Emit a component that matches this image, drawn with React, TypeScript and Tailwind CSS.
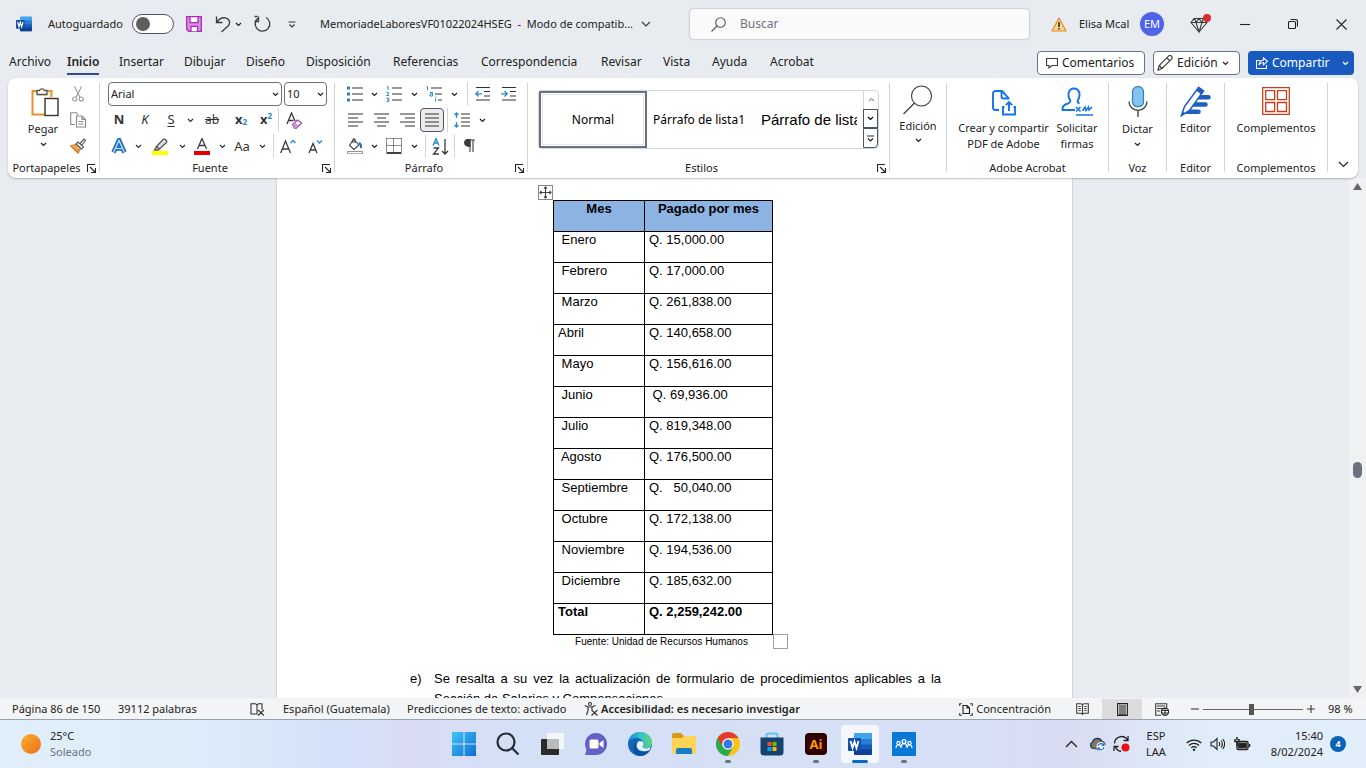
import type { ReactNode } from "react";
import clsx from "clsx";

const months = [
  ["Enero", "Q. 15,000.00"],
  ["Febrero", "Q. 17,000.00"],
  ["Marzo", "Q. 261,838.00"],
  ["Abril", "Q. 140,658.00"],
  ["Mayo", "Q. 156,616.00"],
  ["Junio", " Q. 69,936.00"],
  ["Julio", "Q. 819,348.00"],
  ["Agosto", "Q. 176,500.00"],
  ["Septiembre", "Q.   50,040.00"],
  ["Octubre", "Q. 172,138.00"],
  ["Noviembre", "Q. 194,536.00"],
  ["Diciembre", "Q. 185,632.00"],
];

const tabs = [
  { name: "Archivo", width: "w-[58px]" },
  { name: "Inicio", width: "w-[52px]" },
  { name: "Insertar", width: "w-[65px]" },
  { name: "Dibujar", width: "w-[62px]" },
  { name: "Diseño", width: "w-[60px]" },
  { name: "Disposición", width: "w-[87px]" },
  { name: "Referencias", width: "w-[88px]" },
  { name: "Correspondencia", width: "w-[120px]" },
  { name: "Revisar", width: "w-[62px]" },
  { name: "Vista", width: "w-[49px]" },
  { name: "Ayuda", width: "w-[58px]" },
  { name: "Acrobat", width: "w-[58px]" },
];

type IconProps = { w?: number; h?: number; className?: string; children: ReactNode };

const Icon = ({ w = 16, h = 16, className, children }: IconProps) => (
  <svg
    width={w}
    height={h}
    viewBox={`0 0 ${w} ${h}`}
    fill="none"
    stroke="#3b3b3b"
    strokeWidth="1.1"
    className={clsx("shrink-0", className)}
    aria-hidden="true"
  >
    {children}
  </svg>
);

const Chevron = ({ className }: { className?: string }) => (
  <Icon w={7} h={5} className={className}>
    <path d="M1 1l2.500 2.500L6 1" stroke="currentColor" strokeWidth="1.200" />
  </Icon>
);

type ToolProps = { label: string; className?: string; children: ReactNode };

const Tool = ({ label, className, children }: ToolProps) => (
  <button
    type="button"
    aria-label={label}
    className={clsx("flex h-6 shrink-0 items-center justify-center", className)}
  >
    {children}
  </button>
);

const Drop = ({ label }: { label: string }) => (
  <Tool label={label} className="w-3">
    <Chevron />
  </Tool>
);

const Rule = ({ className }: { className?: string }) => (
  <div className={clsx("h-6 w-px shrink-0 bg-gray-300", className)} />
);

const Divider = () => <div className="mt-[5px] h-[89px] w-px shrink-0 bg-gray-300" />;

const WordLogo = ({ size }: { size: number }) => (
  <svg width={size} height={size} viewBox="0 0 24 24" aria-hidden="true">
    <rect x="6" y="1" width="18" height="22" rx="1.5" fill="#185abd" />
    <path d="M7.500 1h15A1.500 1.500 0 0 1 24 2.500V7H6V2.500A1.500 1.500 0 0 1 7.500 1z" fill="#41a5ee" />
    <path d="M6 7h18v5.500H6z" fill="#2b7cd3" />
    <path d="M6 17.500h18v4a1.500 1.500 0 0 1-1.500 1.500h-15A1.500 1.500 0 0 1 6 21.500z" fill="#103f91" />
    <rect x="0" y="6" width="13" height="13" rx="1" fill="#1450a8" />
    <path d="M2.500 9l2 7 2-6.500 2 6.500 2-7" fill="none" stroke="#fff" strokeWidth="1.800" />
  </svg>
);

const Group = ({
  name,
  launcher,
  className,
  children,
}: {
  name?: string;
  launcher?: boolean;
  className?: string;
  children: ReactNode;
}) => (
  <section className={clsx("flex flex-col pt-1", className)}>
    <div className="h-[76px]">{children}</div>
    <div className="relative flex h-5 items-center justify-center text-[11px]">
      <span className={launcher ? "pr-[14px]" : undefined}>{name}</span>
      {launcher && (
        <button type="button" aria-label={`Opciones de ${name}`} className="absolute right-[3px]">
          <Icon w={9} h={9}>
            <path d="M.5 8V.5H8M3 3l5 5M8.500 4v4.500H4" stroke="#222" />
          </Icon>
        </button>
      )}
    </div>
  </section>
);

const TitleBar = () => (
  <header className="flex h-12 items-center text-[11px]">
    <div className="flex w-[690px] shrink-0 items-center pl-4">
      <WordLogo size={16} />
      <label htmlFor="autosave" className="ml-4 w-[84px] whitespace-nowrap">
        Autoguardado
      </label>
      <input
        id="autosave"
        type="checkbox"
        role="switch"
        className="h-5 w-[42px] shrink-0 appearance-none rounded-full border border-gray-600 bg-white before:mt-[2px] before:ml-[3px] before:block before:size-[14px] before:rounded-full before:bg-[#5d5d5d]"
      />
      <button type="button" aria-label="Guardar" className="ml-3">
        <Icon w={16} h={16}>
          <path d="M.7.7h14.600v14.600H2.700l-2-2z" fill="#e08be6" stroke="#a32fae" strokeWidth="1.300" />
          <path d="M4 .7h8v6H4zM5 15.300v-5h6.500v5" fill="#fff" stroke="#a32fae" strokeWidth="1.300" />
        </Icon>
      </button>
      <button type="button" aria-label="Deshacer" className="ml-3">
        <Icon w={17} h={18}>
          <path d="M2.500 1.500v6h6M2.500 7.500C5 4 8 2.500 11 2.800c4.500.5 6 5.200 3 8.200L7.500 17" strokeWidth="1.300" />
        </Icon>
      </button>
      <button type="button" aria-label="Más acciones para deshacer" className="ml-1">
        <Chevron />
      </button>
      <button type="button" aria-label="Rehacer" className="ml-3">
        <Icon w={18} h={18}>
          <path d="M3.500 1.500h-3M4.500 1.500v5H.500M12 2.500a7.300 7.300 0 1 1-7.500.3" strokeWidth="1.300" />
        </Icon>
      </button>
      <button type="button" aria-label="Personalizar barra" className="ml-4">
        <Icon w={8} h={7}>
          <path d="M.5 1h7M1.500 3.500L4 6l2.500-2.500" strokeWidth="1.200" />
        </Icon>
      </button>
      <button type="button" className="ml-6 flex items-center gap-2 whitespace-pre">
        <span>MemoriadeLaboresVF01022024HSEG  -  Modo de compatib...</span>
        <Icon w={10} h={7}>
          <path d="M1 1l4 4 4-4" strokeWidth="1.200" />
        </Icon>
      </button>
    </div>
    <div className="flex h-[30px] min-w-0 flex-1 items-center gap-[14px] rounded bg-[#fafafa] pl-[21px] shadow-[0_0_2px_rgba(0,0,0,0.4)]">
      <Icon w={15} h={15}>
        <circle cx="9.500" cy="5.500" r="4.800" stroke="#555" />
        <path d="M6 9L.5 14.500" stroke="#555" />
      </Icon>
      <input
        type="search"
        aria-label="Buscar"
        placeholder="Buscar"
        className="min-w-0 flex-1 bg-transparent text-xs outline-none placeholder:text-gray-500"
      />
    </div>
    <div className="flex w-[337px] shrink-0 items-center pl-[22px]">
      <Icon w={16} h={15}>
        <path d="M8 1L15 14H1z" fill="#ffd88c" stroke="#e0872a" strokeWidth="1.200" strokeLinejoin="round" />
        <path d="M8 5v5M8 11v1.500" stroke="#222" strokeWidth="1.500" />
      </Icon>
      <span className="ml-3 w-[61px] whitespace-nowrap">Elisa Mcal</span>
      <span className="flex size-6 items-center justify-center rounded-full bg-[#4f63e8] text-[11px] text-white">
        EM
      </span>
      <button type="button" aria-label="Novedades" className="ml-[26px]">
        <Icon w={22} h={20}>
          <path d="M4 4.500h10l3 4L9 18 1 8.500zM1 8.500h16M6 8.500L9 18l3-9.500M4.500 4.500l1.500 4 3-4 3 4 1.500-4" />
          <circle cx="17" cy="4" r="4" fill="#d92c2c" stroke="none" />
        </Icon>
      </button>
      <button type="button" aria-label="Minimizar" className="ml-7">
        <Icon w={10} h={10}>
          <path d="M0 5.500h10" stroke="#222" />
        </Icon>
      </button>
      <button type="button" aria-label="Restaurar" className="ml-[38px]">
        <Icon w={10} h={10}>
          <rect x=".5" y="2.500" width="7" height="7" rx="1" stroke="#222" />
          <path d="M2.500.5h5a2 2 0 0 1 2 2v5" stroke="#222" />
        </Icon>
      </button>
      <button type="button" aria-label="Cerrar" className="ml-[38px]">
        <Icon w={11} h={11}>
          <path d="M.5.5l10 10M10.500.5l-10 10" stroke="#222" />
        </Icon>
      </button>
    </div>
  </header>
);

const TabBar = () => (
  <div className="flex h-[30px] items-start justify-between pr-[12px] pl-[9px] text-xs">
    <nav className="flex pt-[5px]">
      {tabs.map(({ name, width }) => (
        <button key={name} type="button" className={clsx("text-left leading-[18px] whitespace-nowrap", width)}>
          <span
            className={clsx(
              "block h-[22px] w-fit",
              name === "Inicio" && "border-b-2 border-[#2b4f97] font-semibold",
            )}
          >
            {name}
          </span>
        </button>
      ))}
    </nav>
    <div className="flex gap-2 pt-[3px]">
      <button type="button" className="flex h-6 w-[108px] items-center gap-1 rounded border border-gray-500 bg-white pl-2">
        <Icon w={12} h={12}>
          <path d="M.5 1.500h11v7H6l-3 2.500V8.500H.5z" />
        </Icon>
        Comentarios
      </button>
      <button type="button" className="flex h-6 w-[87px] items-center gap-1 rounded border border-gray-500 bg-white pl-[3px]">
        <Icon w={16} h={16}>
          <path d="M1 15l1.200-4.500L11.500 1.200a1.800 1.800 0 0 1 3 3L5 13.500zM10 3l3 3M2.200 10.500L5 13.500" />
        </Icon>
        Edición
        <Chevron />
      </button>
      <button type="button" className="flex h-6 w-[106px] items-center gap-1 rounded bg-[#185abd] pl-2 text-white">
        <Icon w={12} h={12}>
          <path d="M4 3.500H.5v8h10V8M7.500.8l4 3.500-4 3.500V5.500C5.500 5.500 4 6.500 3 8c.3-3 2-4.800 4.500-5z" stroke="#fff" />
        </Icon>
        Compartir
        <Chevron className="ml-2" />
      </button>
    </div>
  </div>
);

const lines = (d: string) => <path d={d} stroke="#333" strokeWidth="1.200" />;

const FontGroup = () => (
  <Group name="Fuente" launcher className="w-[234px]">
    <div className="flex h-6 gap-[2px] pl-2">
      <div className="relative w-[174px]">
        <select aria-label="Fuente" className="block h-6 w-full appearance-none rounded border border-gray-500 bg-white pl-[2px] text-[11px]">
          <option>Arial</option>
        </select>
        <Chevron className="pointer-events-none absolute top-[10px] right-[3px]" />
      </div>
      <div className="relative w-[43px]">
        <select aria-label="Tamaño" className="block h-6 w-full appearance-none rounded border border-gray-500 bg-white pl-[2px] text-[11px]">
          <option>10</option>
        </select>
        <Chevron className="pointer-events-none absolute top-[10px] right-[3px]" />
      </div>
    </div>
    <div className="flex h-7 items-center pl-[6px] text-[13px] text-[#333]">
      <Tool label="Negrita" className="w-[26px] font-bold">N</Tool>
      <Tool label="Cursiva" className="w-[26px] italic">K</Tool>
      <Tool label="Subrayado" className="w-[26px] underline underline-offset-2">S</Tool>
      <Drop label="Tipos de subrayado" />
      <Tool label="Tachado" className="w-8 text-xs line-through">ab</Tool>
      <Tool label="Subíndice" className="w-[26px] font-bold">
        x<sub className="text-[8px] text-[#2b88c8]">2</sub>
      </Tool>
      <Tool label="Superíndice" className="w-6 font-bold">
        x<sup className="text-[8px] text-[#2b88c8]">2</sup>
      </Tool>
      <Rule />
      <Tool label="Borrar formato" className="w-[30px]">
        <Icon w={17} h={17}>
          <path d="M1 12L5.500 1 9 9M2.500 8.500h5" strokeWidth="1.300" />
          <path d="M6.500 12.500l5-4.500 4 3-5 5H8.500z" fill="#fff" stroke="#a33fb0" strokeWidth="1.300" />
          <path d="M6.500 12.500l2.300-2 4 3.300-2.300 2.200h-2z" fill="#cf8fd8" stroke="none" />
        </Icon>
      </Tool>
    </div>
    <div className="flex h-6 items-center pl-[6px] text-sm text-[#333]">
      <Tool label="Efectos de texto" className="w-[26px]">
        <Icon w={16} h={16}>
          <path d="M2.500 14.500L8 2l5.500 12.500M5 10.500h6" stroke="#1c6fbd" strokeWidth="4.500" />
          <path d="M2.500 14.500L8 2.500l5.500 12M5 10.500h6" stroke="#cfe6f8" strokeWidth="1.200" />
        </Icon>
      </Tool>
      <Drop label="Opciones de efectos" />
      <Tool label="Color de resaltado" className="w-8">
        <Icon w={16} h={17}>
          <path d="M4.500 8.500l6.500-7q1.500-1 3 .5t0 3l-6.500 6zM4.500 8.500L2.500 12H6l1.500-1" fill="#ddd" stroke="#555" strokeWidth="1.300" />
          <path d="M0 13h16v4H0z" fill="#ff0" stroke="none" />
        </Icon>
      </Tool>
      <Drop label="Colores de resaltado" />
      <Tool label="Color de fuente" className="w-7">
        <Icon w={16} h={17}>
          <path d="M3.500 11L8 .5 12.500 11M5 7.500h6" strokeWidth="1.300" />
          <path d="M0 13h16v4H0z" fill="#e80000" stroke="none" />
        </Icon>
      </Tool>
      <Drop label="Colores de fuente" />
      <Tool label="Cambiar mayúsculas" className="w-7 text-[13px]">Aa</Tool>
      <Drop label="Opciones de mayúsculas" />
      <Rule className="ml-[5px]" />
      <Tool label="Aumentar tamaño" className="w-7">
        <Icon w={16} h={15}>
          <path d="M.7 14L5.500 2l5 12M2.500 10h6.300" strokeWidth="1.300" />
          <path d="M10.500 4L13 1.500 15.500 4" stroke="#2b88c8" strokeWidth="1.300" />
        </Icon>
      </Tool>
      <Tool label="Disminuir tamaño" className="w-[26px]">
        <Icon w={15} h={15}>
          <path d="M1 14l4-9.500L9 14M2.500 11h5" strokeWidth="1.300" />
          <path d="M9 1.500L11.500 4 14 1.500" stroke="#2b88c8" strokeWidth="1.300" />
        </Icon>
      </Tool>
    </div>
  </Group>
);

const ParagraphGroup = () => (
  <Group name="Párrafo" launcher className="w-[192px]">
    <div className="flex h-6 items-center pl-[7px]">
      <Tool label="Viñetas" className="w-[26px]">
        <Icon>
          {lines("M5 2h11M5 8h11M5 14h11")}
          <path d="M0 .5h3v3H0zM0 6.500h3v3H0zM0 12.500h3v3H0z" fill="#2b7cb8" stroke="none" />
        </Icon>
      </Tool>
      <Drop label="Biblioteca de viñetas" />
      <Tool label="Numeración" className="w-7">
        <Icon>
          {lines("M6 2h10M6 8h10M6 14h10")}
          <path d="M1 1l1-.5V4M.5 6.500h2v1.500l-2 1.500h2.500M.5 12h2.300v3.500H.5M1 13.800h1.500" stroke="#2b88c8" strokeWidth="1" />
        </Icon>
      </Tool>
      <Drop label="Biblioteca de numeración" />
      <Tool label="Lista multinivel" className="w-7">
        <Icon>
          {lines("M5 2h11M9 8h7M12 14h4")}
          <path d="M.5 1l1-.5V4M4 6.500h2.500V10H4V8h2M9.500 12.500v3M9.500 10.500v1" stroke="#2b88c8" strokeWidth="1" />
        </Icon>
      </Tool>
      <Drop label="Biblioteca de listas" />
      <Rule className="ml-[7px]" />
      <Tool label="Disminuir sangría" className="w-7">
        <Icon w={15}>
          {lines("M1 1.500h14M9 5.500h6M9 10h6M1 14h14")}
          <path d="M7 7.800H.8M3.500 5L.8 7.800l2.700 2.700" stroke="#2b88c8" strokeWidth="1.300" />
        </Icon>
      </Tool>
      <Tool label="Aumentar sangría" className="w-6">
        <Icon w={15}>
          {lines("M1 1.500h14M9 5.500h6M9 10h6M1 14h14")}
          <path d="M0 7.800h6.200M3.500 5l2.700 2.800-2.700 2.700" stroke="#2b88c8" strokeWidth="1.300" />
        </Icon>
      </Tool>
    </div>
    <div className="flex h-7 items-center pl-[7px]">
      <Tool label="Alinear a la izquierda" className="w-[26px]">
        <Icon w={15} h={14}>{lines("M0 1h15M0 5h10M0 9h15M0 13h10")}</Icon>
      </Tool>
      <Tool label="Centrar" className="w-[26px]">
        <Icon w={15} h={14}>{lines("M0 1h15M3 5h9M0 9h15M3 13h9")}</Icon>
      </Tool>
      <Tool label="Alinear a la derecha" className="w-[26px]">
        <Icon w={15} h={14}>{lines("M0 1h15M5 5h10M0 9h15M5 13h10")}</Icon>
      </Tool>
      <Tool label="Justificar" className="w-6 rounded border border-gray-600 bg-[#ebebeb]">
        <Icon w={14} h={14}>{lines("M0 1h14M0 5h14M0 9h14M0 13h14")}</Icon>
      </Tool>
      <Rule className="ml-[3px]" />
      <Tool label="Interlineado" className="w-7">
        <Icon>
          {lines("M7 2h9M7 6h9M7 10h9M7 14h9")}
          <path d="M2.500 1v5M.5 3l2-2 2 2M2.500 10v5M.5 13l2 2 2-2" stroke="#2b88c8" strokeWidth="1.300" />
        </Icon>
      </Tool>
      <Drop label="Opciones de interlineado" />
    </div>
    <div className="flex h-6 items-center pl-[7px]">
      <Tool label="Sombreado" className="w-[26px]">
        <Icon>
          <path d="M6 2L2.500 7.500l4.500 4 5-4.500-4.500-5zM6 5V1.500q1-1.500 2 0V5" stroke="#444" />
          <path d="M12 5q2.500 1 2 5" stroke="#2f6fa5" strokeWidth="2" />
          <path d="M.5 13.500h15v2.300H.5z" fill="#fff" stroke="#777" strokeWidth=".8" />
        </Icon>
      </Tool>
      <Drop label="Colores de sombreado" />
      <Tool label="Bordes" className="w-7">
        <Icon>
          <path d="M.5.500h15M.5 7.500h15M.5.500v14M7.500.500v14M15.500.500v14" strokeDasharray="1 1" stroke="#222" strokeWidth="1" />
          <path d="M.5 15h15" strokeWidth="1.600" stroke="#111" />
        </Icon>
      </Tool>
      <Drop label="Opciones de bordes" />
      <Rule className="ml-[5px]" />
      <Tool label="Ordenar" className="w-7">
        <Icon w={17} h={17}>
          <path d="M1 7.500L4 .8l3 6.700M2.200 5h3.600" stroke="#2b88c8" strokeWidth="1.400" />
          <path d="M1.500 10h5l-5 6H7M13 1v15M10 13l3 3 3-3" strokeWidth="1.300" />
        </Icon>
      </Tool>
      <Rule />
      <Tool label="Mostrar todo" className="w-7">
        <Icon w={11} h={14}>
          <path d="M5 1h6M6 1v12M9 1v12" />
          <path d="M6 .5H4a3.300 3.300 0 0 0 0 6.700h2z" fill="#3b3b3b" />
        </Icon>
      </Tool>
    </div>
  </Group>
);

const StylesGroup = () => (
  <Group name="Estilos" launcher className="min-w-0 flex-1">
    <div className="mt-2 mr-[10px] ml-[10px] flex h-[59px] rounded border border-gray-300 text-xs text-black">
      <button type="button" className="w-[108px] shrink-0 border-2 border-gray-500 outline outline-1 -outline-offset-4 outline-gray-200">
        Normal
      </button>
      <button type="button" className="ml-[6px] w-[96px] overflow-hidden text-left whitespace-nowrap">
        Párrafo de lista1
      </button>
      <button
        type="button"
        className="ml-3 w-[96px] overflow-hidden text-left font-['Liberation_Sans',Arial,sans-serif] text-[15px] whitespace-nowrap"
      >
        Párrafo de lista
      </button>
      <div className="ml-auto flex w-[15px] flex-col">
        <button type="button" aria-label="Estilos anteriores" className="flex flex-1 items-center justify-center border-l border-gray-300 text-gray-400">
          <Chevron className="rotate-180" />
        </button>
        <button type="button" aria-label="Estilos siguientes" className="flex flex-1 items-center justify-center border border-gray-600">
          <Chevron />
        </button>
        <button type="button" aria-label="Más estilos" className="flex flex-1 items-center justify-center rounded-br border border-gray-600">
          <Icon w={7} h={7}>
            <path d="M0 1h7M1 3.500L3.500 6 6 3.500" stroke="#222" strokeWidth="1.200" />
          </Icon>
        </button>
      </div>
    </div>
  </Group>
);

const big = "flex flex-col items-center text-[11px] leading-4 text-center whitespace-nowrap";

const Ribbon = () => (
  <div className="relative z-10 mx-2 flex h-[100px] shrink-0 rounded-lg bg-white shadow-[0_1px_2px_rgba(0,0,0,0.25)]">
    <Group name="Portapapeles" launcher className="w-[91px]">
      <div className="flex">
        <button type="button" className={clsx(big, "w-[70px] pt-1")}>
          <Icon w={30} h={32} className="ml-1">
            <path d="M7 5H2.500v23.500h13" stroke="#e8912d" strokeWidth="2" />
            <path d="M17 5h4.500v6" stroke="#e8912d" strokeWidth="2" />
            <path d="M4.500 6.500h3v3h9v-3h3v5" stroke="#fbe3b8" strokeWidth="1" />
            <path d="M7 8.500V4.500h2.500a2.700 2.700 0 0 1 5 0H17v4z" fill="#fff" stroke="#555" strokeWidth="1.300" />
            <rect x="15" y="12.500" width="13" height="17" fill="#fff" stroke="#333" strokeWidth="1.400" />
          </Icon>
          <span className="mt-[3px]">Pegar</span>
          <Chevron className="mt-[5px]" />
        </button>
        <div className="-ml-3 flex flex-col">
          <Tool label="Cortar" className="w-6">
            <Icon w={12} h={16}>
              <path d="M2.500.5l5.500 11M9.500.5L4 11.500" stroke="#999" />
              <circle cx="2.700" cy="13" r="2" stroke="#999" />
              <circle cx="9.300" cy="13" r="2" stroke="#999" />
            </Icon>
          </Tool>
          <Tool label="Copiar" className="my-[2px] w-6">
            <Icon w={17} h={16}>
              <path d="M5 12.500H.7V.7h5.500l2 2" stroke="#888" />
              <path d="M6.500 4h5.500l3.500 3.500V15h-9zM12 4v3.500h3.500M8.500 9.500h5M8.500 12h5" stroke="#888" />
            </Icon>
          </Tool>
          <Tool label="Copiar formato" className="w-6">
            <Icon w={16} h={16}>
              <path d="M1 8l5-1.500 4.500 4L8 15z" fill="#fbd9a5" stroke="#dd7d1f" strokeWidth="1.400" />
              <path d="M6 6l2-2 5.500 5-2 2zM10 5.500L14 1l1.500 1.500L12 7" fill="#fff" stroke="#555" strokeWidth="1.200" />
              <path d="M3 9l5 4.500M5 8l4 4.500" stroke="#dd7d1f" />
            </Icon>
          </Tool>
        </div>
      </div>
    </Group>
    <Divider />
    <FontGroup />
    <Divider />
    <ParagraphGroup />
    <Divider />
    <StylesGroup />
    <Divider />
    <Group className="w-14">
      <button type="button" className={clsx(big, "w-full pt-[3px]")}>
        <Icon w={30} h={30}>
          <circle cx="18.500" cy="11" r="10" />
          <path d="M11.500 18L.5 29" strokeWidth="1.300" />
        </Icon>
        <span className="mt-[3px]">Edición</span>
        <Chevron className="mt-1" />
      </button>
    </Group>
    <Divider />
    <Group name="Adobe Acrobat" className="w-[161px]">
      <div className="flex gap-[6px] pl-[10px]">
        <button type="button" className={clsx(big, "w-[93px] pt-2")}>
          <Icon w={24} h={26}>
            <path
              d="M7 20H3.500A2.500 2.500 0 0 1 1 17.500v-14A2.500 2.500 0 0 1 3.500 1H10l6.500 7v1.500M9.500 1v5.500q0 2 2 2H16M12.500 17H11v7.500h12V17h-1.500M17 21v-9M13.800 15.200L17 12l3.200 3.200"
              stroke="#1473e6"
              strokeWidth="1.900"
            />
          </Icon>
          <span className="mt-[4px]">
            Crear y compartir
            <br />
            PDF de Adobe
          </span>
        </button>
        <button type="button" className={clsx(big, "w-[42px] pt-2")}>
          <Icon w={32} h={29} className="-mt-[3px]">
            <path
              d="M14 23H1.500q-.5-5 5.500-6.500 3-1 2-3.500c-3-5-1.500-11.500 4-11.500s7 6.500 4 11.500q-1 2.500 1.500 3.500"
              stroke="#1473e6"
              strokeWidth="1.900"
            />
            <path d="M15 20l4.500 4.500M19.500 20L15 24.500M21.500 24l2.500-4 1 3.500 2.500-3.500.5 3 3-3M15 28h17" stroke="#1473e6" strokeWidth="1.500" />
          </Icon>
          <span className="mt-[4px]">
            Solicitar
            <br />
            firmas
          </span>
        </button>
      </div>
    </Group>
    <Divider />
    <Group name="Voz" className="w-[57px]">
      <button type="button" className={clsx(big, "w-full pt-1")}>
        <Icon w={20} h={31}>
          <rect x="4.500" y=".7" width="11" height="20" rx="5" fill="#83c3ee" stroke="#2f7fbf" strokeWidth="1.200" />
          <path d="M1 15.500a9 9 0 0 0 18 0M10 24.500V31" stroke="#444" strokeWidth="1.400" />
        </Icon>
        <span className="mt-[4px]">Dictar</span>
        <Chevron className="mt-[5px]" />
      </button>
    </Group>
    <Divider />
    <Group name="Editor" className="w-[57px]">
      <button type="button" className={clsx(big, "w-full pt-1")}>
        <Icon w={31} h={31}>
          <path d="M17 9h11.500a2.300 2.300 0 0 1 0 4.600H14zM13 16.200h12.500a2.300 2.300 0 0 1 0 4.600H10zM9 23.500h9.500a2.300 2.300 0 0 1 0 4.600H5z" fill="#1f5fc4" stroke="none" />
          <path d="M1.500 29.500l3-9L18.500 1.500l5 3.500L9.500 24.500z" fill="#fff" stroke="#1f5fc4" strokeWidth="1.600" />
          <path d="M18.500 .5l5.500 4-2.500 4-5.500-4zM1 30.500l1.500-5 3 2z" fill="#1f5fc4" stroke="none" />
        </Icon>
        <span className="mt-[3px]">Editor</span>
      </button>
    </Group>
    <Divider />
    <Group name="Complementos" className="w-[102px]">
      <button type="button" className={clsx(big, "w-full pt-[5px]")}>
        <Icon w={28} h={28}>
          <path d="M.7.7h26.600v26.600H.7zM3.700 3.700h9v9h-9zM15.500 3.700h9v9h-9zM3.700 15.500h9v9h-9zM15.500 15.500h9v9h-9z" stroke="#c2401c" strokeWidth="1.300" />
        </Icon>
        <span className="mt-[5px]">Complementos</span>
      </button>
    </Group>
    <Divider />
    <button type="button" aria-label="Contraer la cinta" className="mt-auto mb-[9px] flex w-[30px] justify-center">
      <Icon w={11} h={8}>
        <path d="M1 1l4.500 4.500L10 1" stroke="#222" strokeWidth="1.200" />
      </Icon>
    </button>
  </div>
);

const cell = "border border-black px-1 align-top whitespace-pre leading-[15px] h-[31px]";

const Document = () => (
  <main className="flex min-h-0 flex-1 overflow-hidden">
    <div className="min-w-0 flex-1 overflow-hidden">
      <article className="mx-auto h-full w-[797px] border-x border-gray-300 bg-white font-['Liberation_Sans',Arial,sans-serif] text-black">
        <div className="relative ml-[276px] w-[220px] pt-[22px]">
          <Icon w={15} h={15} className="absolute top-[7px] -left-[15px]">
            <path d="M.5.5h14v14H.5z" fill="#fff" stroke="#888" />
            <path d="M7.500 2v11M2 7.500h11M6 3.500L7.500 2 9 3.500M6 11.500L7.500 13 9 11.500M3.500 6L2 7.500 3.500 9M11.500 6L13 7.500 11.500 9" stroke="#444" />
          </Icon>
          <table className="w-full table-fixed border-collapse text-[13px]">
            <thead>
              <tr className="bg-[#8db3e2]">
                <th className={clsx(cell, "w-[91px]")}>Mes</th>
                <th className={cell}>Pagado por mes</th>
              </tr>
            </thead>
            <tbody>
              {months.map(([month, amount]) => (
                <tr key={month}>
                  <td className={cell}>{month === "Abril" ? month : ` ${month}`}</td>
                  <td className={cell}>{amount}</td>
                </tr>
              ))}
              <tr className="font-bold">
                <td className={cell}>Total</td>
                <td className={cell}>Q. 2,259,242.00</td>
              </tr>
            </tbody>
          </table>
          <span className="absolute -right-[15px] -bottom-[14px] size-[15px] border border-gray-400 bg-white" />
        </div>
        <p className="ml-[276px] w-[217px] text-center text-[10px] leading-[14px]">
          Fuente: Unidad de Recursos Humanos
        </p>
        <div className="mt-5 mr-[131px] ml-[133px] flex font-['Liberation_Sans_Narrow','Liberation_Sans',Arial,sans-serif] text-[13px] leading-5">
          <span className="w-6 shrink-0">e)</span>
          <p className="text-justify">
            Se resalta a su vez la actualización de formulario de procedimientos aplicables a la Sección de Salarios y
            Compensaciones.
          </p>
        </div>
      </article>
    </div>
    <div className="flex w-[17px] shrink-0 flex-col items-center justify-between bg-[#f0f1f3] py-1">
      <Icon w={9} h={9}>
        <path d="M4.500 1L9 8H0z" fill="#666" stroke="none" />
      </Icon>
      <div className="mt-[63px] h-4 w-[9px] rounded-full bg-gray-500" />
      <Icon w={9} h={9}>
        <path d="M4.500 8L9 1H0z" fill="#666" stroke="none" />
      </Icon>
    </div>
  </main>
);

const StatusBar = () => (
  <footer className="flex h-[22px] shrink-0 items-center justify-between border-b border-gray-400 bg-[#f3f4f5] pt-px pl-3 text-[11px] whitespace-nowrap">
    <div className="flex items-center">
      <span className="w-[106px]">Página 86 de 150</span>
      <span className="w-[132px]">39112 palabras</span>
      <Icon w={15} h={13}>
        <path d="M7 1.500v9.500H1V.7h4.500L7 2 8.500.7H12v6M7 11V2M8 7l6 5.500M14 7l-6 5.500" stroke="#333" />
      </Icon>
      <span className="ml-[18px] w-[124px]">Español (Guatemala)</span>
      <span className="w-[177px]">Predicciones de texto: activado</span>
      <Icon w={14} h={14}>
        <circle cx="6" cy="2" r="1.500" />
        <path d="M.7 3.500L4 5v3.500L2.500 13M11.500 3.500L8 5v3M4 5h4M7.500 8l6 5.500M13.500 8l-6 5.500" strokeWidth="1.200" />
      </Icon>
      <span className="ml-[3px] font-semibold">Accesibilidad: es necesario investigar</span>
    </div>
    <div className="flex h-full items-center">
      <button type="button" className="flex items-center gap-[3px] pr-[11px]">
        <Icon w={14} h={13}>
          <path d="M3 .7H.7V3M11 .7h2.300V3M.7 10v2.300H3M13.300 10v2.300H11" />
          <path d="M4 2.500h4l2.500 2.500v5.500H4zM8 2.500V5h2.500" stroke="#222" />
        </Icon>
        Concentración
      </button>
      <Tool label="Modo de lectura" className="w-10">
        <Icon w={13} h={12}>
          <path d="M6.500 1.500L5 .7H.7v9.600H5l1.500 1 1.500-1h4.300V.7H8zM6.500 1.500v10M2.500 3.500h2.300M2.500 5.500h2.300M2.500 7.500h2.300M8.300 3.500h2.300M8.300 5.500h2.300M8.300 7.500h2.300" />
        </Icon>
      </Tool>
      <button type="button" aria-label="Diseño de impresión" className="flex h-full w-10 items-center justify-center bg-[#dcdcdc]">
        <Icon w={11} h={13}>
          <path d="M.6.600h9.800v11.800H.6zM2 3h7M2 5h7M2 7h7M2 9h7M2 11h7" stroke="#222" />
        </Icon>
      </button>
      <Tool label="Diseño web" className="w-10">
        <Icon w={14} h={13}>
          <path d="M6 12.300H.7V.7h11V5M2 3h8M2 5.500h6M2 8h3" />
          <circle cx="10" cy="8.700" r="3.600" stroke="#222" />
          <path d="M6.500 7.500h7M6.500 10h7M10 5v7.500" stroke="#222" strokeWidth=".9" />
        </Icon>
      </Tool>
      <Tool label="Alejar" className="ml-[5px] w-4">
        <Icon w={8} h={8}><path d="M0 4h8" /></Icon>
      </Tool>
      <input
        type="range"
        aria-label="Zoom"
        min={10}
        max={190}
        defaultValue={98}
        className="h-4 w-[100px] appearance-none bg-[linear-gradient(#666,#666)] bg-[length:100%_1px] bg-center bg-no-repeat [&::-webkit-slider-thumb]:h-[11px] [&::-webkit-slider-thumb]:w-[5px] [&::-webkit-slider-thumb]:appearance-none [&::-webkit-slider-thumb]:bg-[#555]"
      />
      <Tool label="Acercar" className="w-4">
        <Icon w={8} h={8}><path d="M0 4h8M4 0v8" /></Icon>
      </Tool>
      <span className="ml-[9px] w-[38px]">98 %</span>
    </div>
  </footer>
);

const apps: { name: string; state?: "open" | "active"; art: ReactNode }[] = [
  {
    name: "Inicio",
    art: (
      <>
        <linearGradient id="win" x1="0" y1="0" x2="1" y2="1">
          <stop stopColor="#41c4f7" />
          <stop offset="1" stopColor="#0a6fd0" />
        </linearGradient>
        <path d="M0 0h11.500v11.500H0zM12.500 0H24v11.500H12.500zM0 12.500h11.500V24H0zM12.500 12.500H24V24H12.500z" fill="url(#win)" />
      </>
    ),
  },
  {
    name: "Buscar",
    art: <path d="M10 1.500a8.500 8.500 0 1 1 0 17 8.500 8.500 0 0 1 0-17zM16.500 16.500l6 6" fill="#d5e0ee" stroke="#222b36" strokeWidth="2.200" />,
  },
  {
    name: "Vista de tareas",
    art: (
      <>
        <rect x="1" y="7" width="18" height="16" rx="1" fill="#2b2b2b" />
        <rect x="7" y="1" width="17" height="16" rx="1" fill="#f4f6f8" />
        <path d="M7 7h12v10H7z" fill="#b8babd" />
      </>
    ),
  },
  {
    name: "Chat",
    art: (
      <>
        <path d="M12 1a11 11 0 0 1 0 22H1l1.500-5.500A11 11 0 0 1 12 1z" fill="#6160c4" />
        <rect x="5.500" y="7.500" width="9" height="9" rx="1.500" fill="#fff" />
        <path d="M15.500 11l4-3v8l-4-3z" fill="#fff" />
      </>
    ),
  },
  {
    name: "Edge",
    art: (
      <>
        <linearGradient id="edge" x1="0" y1=".4" x2="1" y2=".3">
          <stop stopColor="#1687d5" />
          <stop offset=".5" stopColor="#35bfd5" />
          <stop offset="1" stopColor="#5fd868" />
        </linearGradient>
        <circle cx="12" cy="12" r="12" fill="#1267b5" />
        <path d="M0 11C1 4.500 6 0 12 0c7 0 12 5 12 10.500 0 4-3 6-6 6-2.500 0-3.500-1-3.500-1.800 0-.7 1-1.200 1-3C15.500 8.500 12 6 8 6 4 6 1.500 8.500 0 11z" fill="url(#edge)" />
        <path d="M9.500 10.500c-3 3-1 9 5 9.500 3 .2 5.500-1 7.500-2.500-2 4-6 6.500-10 6.500-5-1-8-6-6.500-10 .7-2 2-3.500 4-3.500z" fill="#0c4f9e" />
        <path d="M10.500 9.500c2.500-1.300 5 .2 5 2.500 0 1.500-1 2-1 2.800 0 .8 1 1.700 3.500 1.700 2 0 3.500-.6 4.700-1.500-.3 1.500-1 2.700-1.500 3.200-5 2-12 1-12.500-4.200 0-2 .7-3.700 1.800-4.500z" fill="#e8f3fb" />
      </>
    ),
  },
  {
    name: "Explorador de archivos",
    art: (
      <>
        <path d="M0 3q0-2 2-2h7l3 3h10q2 0 2 2v3H0z" fill="#d99a13" />
        <path d="M0 6h10l2-2h10q2 0 2 2v14q0 2-2 2H2q-2 0-2-2z" fill="#fcd458" />
        <path d="M4 22v-4q0-2 2-2h12q2 0 2 2v4z" fill="#1a7cc4" />
      </>
    ),
  },
  {
    name: "Chrome",
    state: "open",
    art: (
      <>
        <circle cx="12" cy="12" r="12" fill="#fbc116" />
        <path d="M12 12L1.600 6A12 12 0 0 0 12 24l5.200-9z" fill="#2da94f" />
        <path d="M1.600 6A12 12 0 0 1 22.400 6H12v6H5z" fill="#e33b2e" />
        <circle cx="12" cy="12" r="5.800" fill="#fff" />
        <circle cx="12" cy="12" r="4.500" fill="#3778e8" />
      </>
    ),
  },
  {
    name: "Microsoft Store",
    art: (
      <>
        <path d="M6.500 6V3.500Q6.500 1.500 8.500 1.500h7q2 0 2 2V6" fill="none" stroke="#5bc4ef" strokeWidth="2" />
        <path d="M.5 5.500h23V20q0 3.500-3.500 3.500H4Q.5 23.500.5 20z" fill="#17426f" />
        <path d="M7.500 10h4v4h-4z" fill="#f25022" />
        <path d="M12.500 10h4v4h-4z" fill="#7fba00" />
        <path d="M7.500 15h4v4h-4z" fill="#00a4ef" />
        <path d="M12.500 15h4v4h-4z" fill="#ffb900" />
      </>
    ),
  },
  {
    name: "Illustrator",
    state: "open",
    art: (
      <>
        <rect x="1" y="1" width="22" height="22" rx="4" fill="#330000" />
        <text x="12" y="17" textAnchor="middle" fontSize="13" fontWeight="700" fill="#ff9a00">
          Ai
        </text>
      </>
    ),
  },
  { name: "Word", state: "active", art: <WordLogo size={24} /> },
  {
    name: "Colaboración",
    state: "open",
    art: (
      <>
        <path d="M0 0h24v24H0z" fill="#0b78d6" />
        <g fill="none" stroke="#fff" strokeWidth="1.200">
          <circle cx="6.500" cy="11" r="1.600" />
          <circle cx="12" cy="9.500" r="1.900" />
          <circle cx="17.500" cy="11" r="1.600" />
          <path d="M4 16q.2-3 2.500-3t2.500 3M9 15.500q.2-3.800 3-3.800t3 3.800M15 16q.2-3 2.500-3t2.500 3" />
        </g>
      </>
    ),
  },
];

const Taskbar = () => (
  <div className="grid h-12 shrink-0 grid-cols-[1fr_auto_1fr] items-center bg-[linear-gradient(90deg,#e1effa_0%,#deecfa_14%,#d3e1f9_25%,#d9dcf3_30%,#d4e0f6_38%,#d6e0f5_70%,#d8dcf2_78%,#e0edf9_88%,#e2eefa_100%)] text-[11px]">
    <div className="flex items-center gap-[9px] pl-[21px] leading-4">
      <span className="size-5 rounded-full bg-linear-to-br from-[#f8b02c] to-[#ee6a1e]" />
      <div>
        <p>25°C</p>
        <p className="text-gray-500">Soleado</p>
      </div>
    </div>
    <nav className="flex pl-px">
      {apps.map(({ name, state, art }) => (
        <button key={name} type="button" aria-label={name} className="flex h-12 w-11 items-center justify-center">
          <span
            className={clsx(
              "relative flex h-[38px] w-[38px] items-center justify-center rounded",
              state === "active" && "bg-white/70",
            )}
          >
            <svg width="24" height="24" viewBox="0 0 24 24" aria-hidden="true">
              {art}
            </svg>
            {state && (
              <span
                className={clsx(
                  "absolute bottom-0 h-[3px] rounded-full",
                  state === "active" ? "w-4 bg-[#0b6bc4]" : "w-[6px] bg-gray-500",
                )}
              />
            )}
          </span>
        </button>
      ))}
    </nav>
    <div className="flex items-center justify-end pr-5 leading-4">
      <Icon w={13} h={8}>
        <path d="M1 7l5.500-5.500L12 7" stroke="#222" strokeWidth="1.300" />
      </Icon>
      <Icon w={17} h={14} className="ml-[11px]">
        <path d="M4 11.500A3.500 3.500 0 0 1 3.500 5C5 .5 11 0 13 4.500c2 .3 3 2 3 3.500l-6 4z" fill="#777" stroke="#333" strokeWidth="1.200" />
        <circle cx="12" cy="9.500" r="4.500" fill="#fff" stroke="none" />
        <path d="M9 9a3 3 0 0 1 5.500-1M15 6v2.500h-2.500M15 10a3 3 0 0 1-5.500 1.500M9 13.500V11h2.500" stroke="#1a6fc4" strokeWidth="1.200" />
      </Icon>
      <Icon w={18} h={18} className="ml-[7px]">
        <path d="M1.500 8.500A7 7 0 0 1 14.500 5M15 1v4.500h-4.500M8 16.500A7 7 0 0 1 2.500 12M1 16v-4.500h4.500" stroke="#222" strokeWidth="1.300" />
        <circle cx="12.500" cy="12.500" r="4" fill="#e81010" stroke="none" />
      </Icon>
      <div className="ml-[13px] w-6 text-center">
        <p>ESP</p>
        <p>LAA</p>
      </div>
      <Icon w={16} h={13} className="ml-[18px]">
        <path d="M.7 5a10.500 10.500 0 0 1 14.600 0M3 7.500a7 7 0 0 1 10 0M5.300 9.800a3.800 3.800 0 0 1 5.400 0" stroke="#222" strokeWidth="1.300" />
        <circle cx="8" cy="11.800" r="1.200" fill="#222" stroke="none" />
      </Icon>
      <Icon w={15} h={14} className="ml-2">
        <path d="M1 5h2.500L7 1.500v11L3.500 9H1zM9 5q1.500 2 0 4M11 3.500q2.800 3.500 0 7M12.800 2q3.700 5 0 10" stroke="#222" />
      </Icon>
      <Icon w={17} h={14} className="ml-[9px]">
        <rect x="3" y="4.500" width="11" height="8" rx="1.500" fill="#fff" stroke="#222" strokeWidth="1.400" />
        <path d="M4.500 6h8v5h-8z" fill="#222" />
        <path d="M15.500 7v3M3 0v3M1 2v2.500h4V2M3 4.500V9" stroke="#222" strokeWidth="1.500" />
      </Icon>
      <div className="ml-3 w-[60px] text-right">
        <p>15:40</p>
        <p>8/02/2024</p>
      </div>
      <span className="ml-[7px] flex size-4 items-center justify-center rounded-full bg-[#0b63b8] text-[9px] font-bold text-white">
        4
      </span>
    </div>
  </div>
);

const App = () => (
  <div className="flex h-screen flex-col overflow-hidden bg-[#e8ecf0] font-['Noto_Sans','Open_Sans',sans-serif] text-[#222]">
    <TitleBar />
    <TabBar />
    <Ribbon />
    <Document />
    <StatusBar />
    <Taskbar />
  </div>
);

export default App;
